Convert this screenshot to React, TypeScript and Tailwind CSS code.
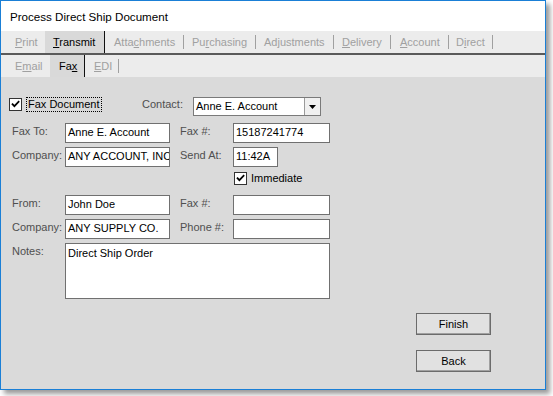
import React from "react";

const U = ({ children }: { children: React.ReactNode }) => <span className="underline underline-offset-[1px]">{children}</span>;

function Check() {
  return (
    <div className="w-[13px] h-[13px] border border-[#333333] bg-white flex items-center justify-center">
      <svg width="11" height="11" viewBox="0 0 11 11">
        <path d="M2.5 5.2 L4.4 7.2 L8.6 2.8" fill="none" stroke="#000" strokeWidth="1.7" strokeLinecap="square" />
      </svg>
    </div>
  );
}

function Tab({ w, pl, selected, disabled, children }: { w: string; pl: string; selected?: boolean; disabled?: boolean; children: React.ReactNode }) {
  return (
    <div className={`${w} ${pl} flex items-center ${selected ? "bg-[#d9d9d9]" : ""} ${disabled ? "text-[#a0a0a0]" : "text-black"}`}>
      <span>{children}</span>
    </div>
  );
}

const Sep = () => <div className="w-px h-[14px] self-center bg-[#a0a0a0]" />;
const DarkSep = () => <div className="w-px bg-[#111111]" />;

function Input({ w, h = "h-[20px]", children, pt = "pt-[2px]" }: { w: string; h?: string; children?: React.ReactNode; pt?: string }) {
  return (
    <div className={`${w} ${h} border border-[#707070] bg-white pl-[2px] ${pt} text-black whitespace-nowrap overflow-hidden`}>{children}</div>
  );
}

const Label = ({ w = "w-[53px]", children }: { w?: string; children: React.ReactNode }) => (
  <div className={`${w} pt-[2px] text-[#4f4f4f] whitespace-nowrap`}>{children}</div>
);

export default function App() {
  return (
    <div className="w-[553px] h-[396px] bg-white font-['Liberation_Sans',Arial,sans-serif]">
      <div className="w-[546px] h-[390px] border border-[#1a7fd6] flex flex-col bg-[#dadada] shadow-[4px_4px_5px_rgba(0,0,0,0.4)]">
        <div className="h-[30px] bg-white flex items-center pl-[9px] text-[11.6px] text-black pt-[1px]">Process Direct Ship Document</div>
        <div className="h-[22px] bg-[#ececec] flex text-[11px]">
          <div className="w-[6px]" />
          <Tab w="w-[38px]" pl="pl-[8px]" disabled><U>P</U>rint</Tab>
          <Tab w="w-[59px]" pl="pl-[8px]" selected><U>T</U>ransmit</Tab>
          <DarkSep />
          <Tab w="w-[78px]" pl="pl-[9px]" disabled>Atta<U>c</U>hments</Tab>
          <Sep />
          <Tab w="w-[71px]" pl="pl-[8px]" disabled>Pu<U>r</U>chasing</Tab>
          <Sep />
          <Tab w="w-[77px]" pl="pl-[8px]" disabled>Ad<U>j</U>ustments</Tab>
          <Sep />
          <Tab w="w-[56px]" pl="pl-[8px]" disabled><U>D</U>elivery</Tab>
          <Sep />
          <Tab w="w-[57px]" pl="pl-[9px]" disabled><U>A</U>ccount</Tab>
          <Sep />
          <Tab w="w-[43px]" pl="pl-[7px]" disabled>D<U>i</U>rect</Tab>
          <Sep />
        </div>
        <div className="h-[2px] bg-[#5a5a5a]" />
        <div className="h-[22px] bg-[#ececec] flex text-[11px]">
          <div className="w-[6px]" />
          <Tab w="w-[43px]" pl="pl-[8px]" disabled>E<U>m</U>ail</Tab>
          <Tab w="w-[34px]" pl="pl-[9px]" selected>Fa<U>x</U></Tab>
          <DarkSep />
          <Tab w="w-[33px]" pl="pl-[9px]" disabled><U>E</U>DI</Tab>
          <Sep />
        </div>
        <div className="flex-1 pl-[11px] pt-[19px] text-[11px] leading-[13px] flex flex-col">
          {/* Row A */}
          <div className="flex h-[20px]">
            <div className="w-[133px] flex ml-[-3px]">
              <div className="mt-[2px]"><Check /></div>
              <div className="ml-[4px] mt-[1px] h-[15px] border border-dotted border-black px-[1px] text-black whitespace-nowrap">Fax Document</div>
            </div>
            <Label w="w-[51px]">Contact:</Label>
            <div className="w-[128px] h-[19px] mt-[1px] border border-[#7a7a7a] bg-white flex">
              <div className="flex-1 pl-[2px] pt-[2px] text-black whitespace-nowrap">Anne E. Account</div>
              <div className="w-[16px] border-l border-[#9a9a9a] bg-[#f0f0f0] flex items-center justify-center">
                <svg width="7" height="4" viewBox="0 0 7 4"><path d="M0 0 H7 L3.5 4 Z" fill="#000" /></svg>
              </div>
            </div>
          </div>
          {/* Row B */}
          <div className="flex h-[20px] mt-[7px]">
            <Label>Fax To:</Label>
            <Input w="w-[105px]">Anne E. Account</Input>
            <div className="w-[10px]" />
            <Label>Fax #:</Label>
            <Input w="w-[97px]">15187241774</Input>
          </div>
          {/* Row C */}
          <div className="flex h-[20px] mt-[4px]">
            <Label>Company:</Label>
            <Input w="w-[105px]">ANY ACCOUNT, INC</Input>
            <div className="w-[10px]" />
            <Label>Send At:</Label>
            <Input w="w-[45px]">11:42A</Input>
          </div>
          {/* Row D */}
          <div className="flex h-[13px] mt-[5px] items-center">
            <div className="ml-[222px]"><Check /></div>
            <div className="ml-[4px] text-black">Immediate</div>
          </div>
          {/* Row E */}
          <div className="flex h-[20px] mt-[10px]">
            <Label>From:</Label>
            <Input w="w-[105px]">John Doe</Input>
            <div className="w-[10px]" />
            <Label>Fax #:</Label>
            <Input w="w-[97px]" />
          </div>
          {/* Row F */}
          <div className="flex h-[20px] mt-[4px]">
            <Label>Company:</Label>
            <Input w="w-[105px]">ANY SUPPLY CO.</Input>
            <div className="w-[10px]" />
            <Label>Phone #:</Label>
            <Input w="w-[97px]" />
          </div>
          {/* Row G */}
          <div className="flex h-[56px] mt-[4px]">
            <Label>Notes:</Label>
            <Input w="w-[265px]" h="h-[56px]" pt="pt-[3px]">Direct Ship Order</Input>
          </div>
          {/* Buttons */}
          <div className="ml-[404px] flex flex-col">
            <button className="mt-[14px] w-[75px] h-[22px] border border-[#6b6b6b] bg-[#e1e1e1] shadow-[inset_-1px_-1px_0_#a0a0a0] text-black text-[11px] leading-[13px] font-['Liberation_Sans',Arial,sans-serif]">Finish</button>
            <button className="mt-[15px] w-[75px] h-[22px] border border-[#6b6b6b] bg-[#e1e1e1] shadow-[inset_-1px_-1px_0_#a0a0a0] text-black text-[11px] leading-[13px] font-['Liberation_Sans',Arial,sans-serif]">Back</button>
          </div>
        </div>
      </div>
    </div>
  );
}
